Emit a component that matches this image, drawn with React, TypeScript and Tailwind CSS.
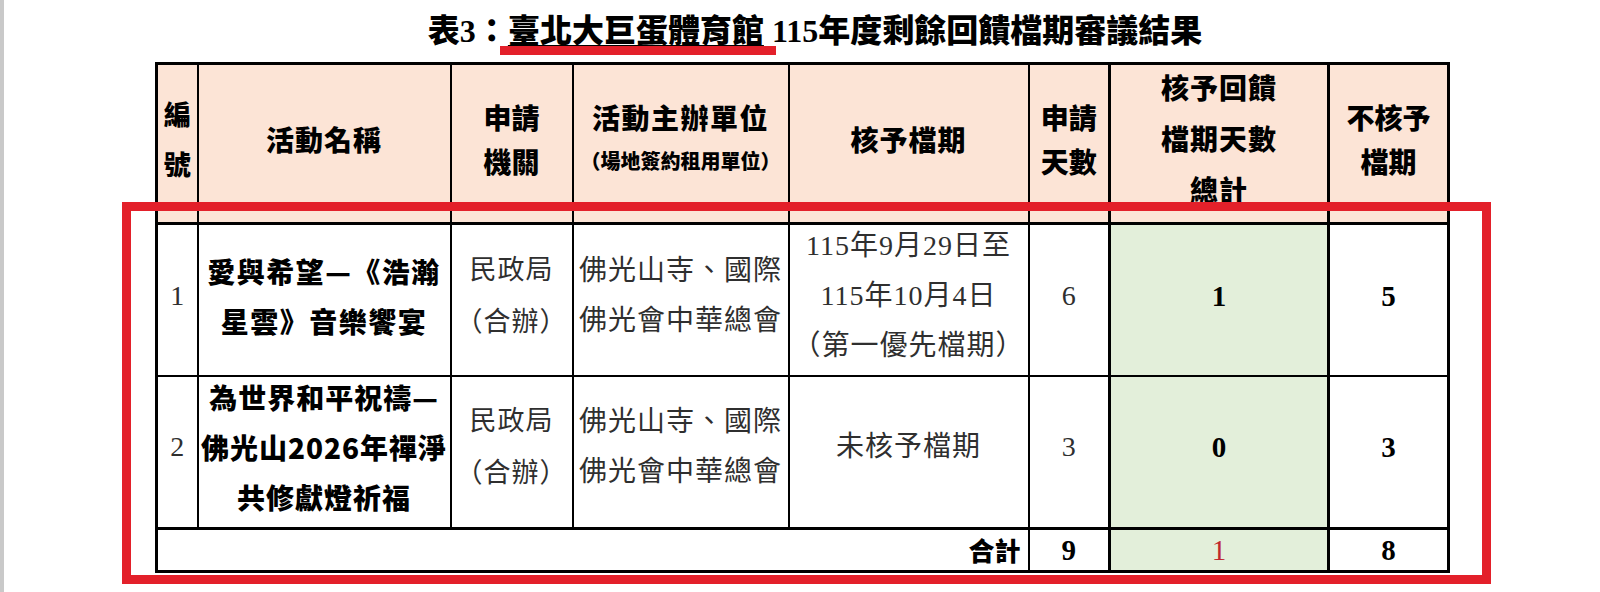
import React from 'react';

const heavy = "font-['Noto_Sans_CJK_TC',sans-serif] font-black text-black";
const serif = "font-['Liberation_Serif','Noto_Sans_CJK_TC',serif] text-[#2f2f2f]";
const numBold = "font-['Liberation_Serif',serif] font-bold text-black text-[29px] leading-[32px]";
const numReg = `text-[28px] leading-[32px] ${serif}`;

const th = "bg-[#fce4d6] border-2 border-black border-b-[3px] p-0 align-middle text-center leading-none";
const td = "border-2 border-black p-0 align-middle text-center leading-none";
const r2 = `${td} border-b-[3px]`;

// the scanned table sits a few pixels above the middle of each cell
const upH = '-translate-y-[5px]';
const up1 = '-translate-y-[4px]';
const up2 = '-translate-y-[5px]';

function Lines({ lines, className }: { lines: string[]; className: string }) {
  return (
    <div className={`whitespace-nowrap ${className}`}>
      {lines.map((l) => (
        <div key={l}>{l}</div>
      ))}
    </div>
  );
}

export default function App() {
  return (
    <div className="min-h-[592px] w-full bg-white border-l-4 border-[#c9c9c9]">
      {/* 標題 */}
      <div className="flex h-[62px] justify-center pl-[26px] pt-[12px]">
        <div className={`relative whitespace-nowrap text-[32px] leading-[32px] ${heavy}`}>
          表<span className="font-['Liberation_Serif',serif] font-bold">3</span>：
          <span className="underline decoration-[1.5px] underline-offset-[3px]">臺北大巨蛋體育館</span>
          <span className="font-['Liberation_Serif',serif] font-bold">{' 115'}</span>年度剩餘回饋檔期審議結果
          <div className="absolute left-[72px] top-[34px] h-[9px] w-[276px] bg-[#e3202a]" />
        </div>
      </div>

      <div className="relative ml-[151px] w-[1295px]">
        <table className="w-[1295px] table-fixed border-collapse border-[3px] border-black">
          <colgroup>
            <col className="w-[41px]" />
            <col className="w-[253px]" />
            <col className="w-[122px]" />
            <col className="w-[216px]" />
            <col className="w-[240px]" />
            <col className="w-[81px]" />
            <col className="w-[219px]" />
            <col className="w-[120px]" />
          </colgroup>
          <thead>
            <tr className="h-[160px]">
              <th className={th}>
                <Lines lines={['編', '號']} className={`${upH} text-[27px] leading-[50px] ${heavy}`} />
              </th>
              <th className={th}>
                <Lines lines={['活動名稱']} className={`${upH} text-[28px] leading-[44px] tracking-[1px] ${heavy}`} />
              </th>
              <th className={th}>
                <Lines lines={['申請', '機關']} className={`${upH} text-[28px] leading-[44px] ${heavy}`} />
              </th>
              <th className={th}>
                <div className={`${upH} whitespace-nowrap ${heavy}`}>
                  <div className="text-[28px] leading-[44px] tracking-[1.5px]">活動主辦單位</div>
                  <div className="text-[20px] leading-[44px]">（場地簽約租用單位）</div>
                </div>
              </th>
              <th className={th}>
                <Lines lines={['核予檔期']} className={`${upH} text-[28px] leading-[44px] tracking-[1px] ${heavy}`} />
              </th>
              <th className={th}>
                <Lines lines={['申請', '天數']} className={`${upH} text-[28px] leading-[44px] ${heavy}`} />
              </th>
              <th className={`${th} border-x-[3px]`}>
                <Lines
                  lines={['核予回饋', '檔期天數', '總計']}
                  className={`${upH} text-[28px] leading-[51px] tracking-[1px] ${heavy}`}
                />
              </th>
              <th className={th}>
                <Lines lines={['不核予', '檔期']} className={`${upH} text-[28px] leading-[44px] ${heavy}`} />
              </th>
            </tr>
          </thead>
          <tbody>
            <tr className="h-[151px]">
              <td className={td}>
                <div className={`${up1} ${numReg}`}>1</div>
              </td>
              <td className={td}>
                <Lines
                  lines={['愛與希望—《浩瀚', '星雲》音樂饗宴']}
                  className={`${up1} text-[28px] leading-[50px] tracking-[1.5px] ${heavy}`}
                />
              </td>
              <td className={td}>
                <Lines lines={['民政局', '（合辦）']} className={`${up1} text-[27px] leading-[52px] tracking-[1px] ${serif}`} />
              </td>
              <td className={td}>
                <Lines
                  lines={['佛光山寺、國際', '佛光會中華總會']}
                  className={`${up1} text-[28px] leading-[50px] tracking-[1px] ${serif}`}
                />
              </td>
              <td className={td}>
                <Lines
                  lines={['115年9月29日至', '115年10月4日', '（第一優先檔期）']}
                  className={`${up1} text-[28px] leading-[50px] tracking-[1px] ${serif}`}
                />
              </td>
              <td className={td}>
                <div className={`${up1} ${numReg}`}>6</div>
              </td>
              <td className={`${td} border-x-[3px] bg-[#e3efda]`}>
                <div className={`${up1} ${numBold}`}>1</div>
              </td>
              <td className={td}>
                <div className={`${up1} ${numBold}`}>5</div>
              </td>
            </tr>
            <tr className="h-[152px]">
              <td className={r2}>
                <div className={`${up2} ${numReg}`}>2</div>
              </td>
              <td className={r2}>
                <Lines
                  lines={['為世界和平祝禱—', '佛光山2026年禪淨', '共修獻燈祈福']}
                  className={`${up2} text-[28px] leading-[50px] tracking-[1px] ${heavy}`}
                />
              </td>
              <td className={r2}>
                <Lines lines={['民政局', '（合辦）']} className={`${up2} text-[27px] leading-[52px] tracking-[1px] ${serif}`} />
              </td>
              <td className={r2}>
                <Lines
                  lines={['佛光山寺、國際', '佛光會中華總會']}
                  className={`${up2} text-[28px] leading-[50px] tracking-[1px] ${serif}`}
                />
              </td>
              <td className={r2}>
                <Lines lines={['未核予檔期']} className={`${up2} text-[28px] leading-[50px] tracking-[1px] ${serif}`} />
              </td>
              <td className={r2}>
                <div className={`${up2} ${numReg}`}>3</div>
              </td>
              <td className={`${r2} border-x-[3px] bg-[#e3efda]`}>
                <div className={`${up2} ${numBold}`}>0</div>
              </td>
              <td className={r2}>
                <div className={`${up2} ${numBold}`}>3</div>
              </td>
            </tr>
            <tr className="h-[43px]">
              <td colSpan={5} className={`${td} pr-[7px] text-right`}>
                <div className={`text-[26px] leading-[32px] ${heavy}`}>合計</div>
              </td>
              <td className={td}>
                <div className={numBold}>9</div>
              </td>
              <td className={`${td} border-x-[3px] bg-[#e3efda]`}>
                <div className="font-['Liberation_Serif',serif] text-[29px] leading-[32px] text-[#c0272d]">1</div>
              </td>
              <td className={td}>
                <div className={numBold}>8</div>
              </td>
            </tr>
          </tbody>
        </table>

        {/* 紅框標示 */}
        <div className="pointer-events-none absolute left-[-33px] top-[140px] h-[382px] w-[1369px] border-[9px] border-[#e3202a]" />
      </div>
    </div>
  );
}
